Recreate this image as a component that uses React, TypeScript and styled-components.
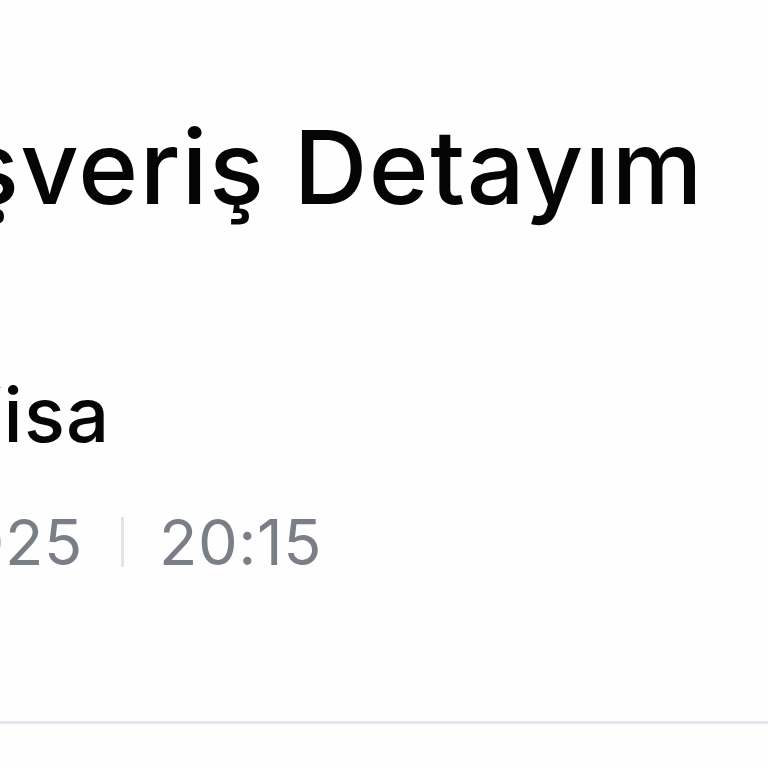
import React from 'react';
import styled, { createGlobalStyle } from 'styled-components';

const GlobalStyle = createGlobalStyle`
  html, body {
    margin: 0;
    padding: 0;
    background: #fefefe;
  }
  body {
    font-family: Inter, "Noto Sans", sans-serif;
    overflow: hidden;
  }
`;

const Page = styled.div`
  width: 768px;
  height: 768px;
  overflow: hidden;
`;

const Content = styled.div`
  display: flex;
  flex-direction: column;
  margin-left: -254px;
  padding-top: 107px;
`;

const Header = styled.div`
  display: flex;
  align-items: center;
  gap: 30px;
`;

const BackButton = styled.button`
  display: flex;
  align-items: center;
  justify-content: center;
  width: 60px;
  height: 60px;
  padding: 0;
  border: 0;
  background: transparent;
  color: #0a0a0a;
  flex-shrink: 0;
`;

const Title = styled.h1`
  margin: 0;
  font-size: 102px;
  font-weight: 500;
  line-height: 120px;
  color: #050505;
  white-space: nowrap;
  letter-spacing: 1.4px;
`;

const Store = styled.div`
  margin-top: 142px;
  font-size: 76px;
  font-weight: 500;
  line-height: 90px;
  color: #050505;
  white-space: nowrap;
  letter-spacing: 1.2px;
`;

const Meta = styled.div`
  display: flex;
  align-items: center;
  margin-top: 43px;
  font-size: 63px;
  font-weight: 400;
  line-height: 80px;
  color: #7a7f87;
  white-space: nowrap;
  letter-spacing: 0.6px;
`;

const Separator = styled.span`
  width: 3px;
  height: 50px;
  margin: 0 35px 0 38px;
  background: #e3e4e7;
`;

const Divider = styled.hr`
  margin: 139px 0 0;
  border: 0;
  height: 3px;
  background: #e6e4ec;
  width: 1200px;
`;

export default function App() {
  return (
    <Page>
      <GlobalStyle />
      <Content>
        <Header>
          <BackButton aria-label="Geri">
            <svg width="48" height="48" viewBox="0 0 24 24" fill="none" stroke="currentColor" strokeWidth="2" strokeLinecap="round" strokeLinejoin="round">
              <path d="M15 18l-6-6 6-6" />
            </svg>
          </BackButton>
          <Title>Alışveriş Detayım</Title>
        </Header>
        <Store>Kart: Visa</Store>
        <Meta>
          <span>12.03.2025</span>
          <Separator />
          <span>20:15</span>
        </Meta>
        <Divider />
      </Content>
    </Page>
  );
}
